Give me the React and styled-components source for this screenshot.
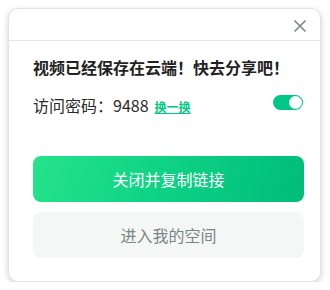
import React from "react";
import styled, { createGlobalStyle } from "styled-components";

const Global = createGlobalStyle`
  html, body {
    margin: 0;
    background: #ffffff;
  }
  body {
    padding: 8px 8px 0 8px;
    font-family: "Noto Sans CJK SC", "Noto Sans", sans-serif;
  }
`;

const Card = styled.div`
  width: 313px;
  height: 274px;
  box-sizing: border-box;
  background: #ffffff;
  border: 1px solid #dfe5e3;
  border-radius: 10px;
  box-shadow: 0 2px 6px rgba(0, 0, 0, 0.18);
  display: flex;
  flex-direction: column;
`;

const Header = styled.div`
  height: 31px;
  border-bottom: 1px solid #e1e9e6;
  display: flex;
  align-items: center;
  justify-content: flex-end;
  padding-right: 14px;
`;

const Close = styled.button`
  border: 0;
  padding: 0;
  background: transparent;
  width: 12px;
  height: 12px;
  display: block;
  margin-top: 2px;
  cursor: pointer;
`;

const Body = styled.div`
  padding: 14px 16px 0 24px;
  display: flex;
  flex-direction: column;
`;

const Title = styled.h2`
  margin: 0;
  font-size: 16px;
  line-height: 24px;
  font-weight: 700;
  color: #222222;
`;

const Row = styled.div`
  display: flex;
  align-items: center;
  margin-top: 14px;
  height: 24px;
`;

const Label = styled.span`
  font-size: 16px;
  line-height: 24px;
  color: #2b2b2b;
`;

const Refresh = styled.a`
  font-size: 12px;
  font-weight: 700;
  color: #00c785;
  text-decoration: underline;
  margin-left: 6px;
  margin-top: 2px;
  cursor: pointer;
`;

const Toggle = styled.span`
  margin-left: auto;
  margin-right: 1px;
  margin-top: -5px;
  width: 30px;
  height: 15px;
  border-radius: 8px;
  background: ${props => (props.on ? "#00c785" : "#cfd6d4")};
  display: flex;
  align-items: center;
  justify-content: ${props => (props.on ? "flex-end" : "flex-start")};
  padding: 0 1px;
  box-sizing: border-box;
`;

const Knob = styled.span`
  width: 13px;
  height: 13px;
  border-radius: 50%;
  background: #ffffff;
`;

const Actions = styled.div`
  margin-top: 39px;
  display: flex;
  flex-direction: column;
  gap: 10px;
`;

const Button = styled.button`
  height: 46px;
  border: 0;
  border-radius: 8px;
  font-family: inherit;
  font-size: 16px;
  cursor: pointer;
  color: ${props => (props.primary ? "#ffffff" : "#7b8582")};
  background: ${props =>
    props.primary
      ? "linear-gradient(110deg, #26e38b 0%, #0fd385 45%, #00bc7b 100%)"
      : "#f5f7f7"};
`;

export default function App() {
  return (
    <>
      <Global />
      <Card>
        <Header>
          <Close type="button" aria-label="关闭">
            <svg width="12" height="12" viewBox="0 0 12 12">
              <path
                d="M1 1L11 11M11 1L1 11"
                stroke="#7f8986"
                strokeWidth="1.7"
                strokeLinecap="round"
              />
            </svg>
          </Close>
        </Header>
        <Body>
          <Title>视频已经保存在云端！快去分享吧！</Title>
          <Row>
            <Label>访问密码：9488</Label>
            <Refresh>换一换</Refresh>
            <Toggle on>
              <Knob />
            </Toggle>
          </Row>
          <Actions>
            <Button type="button" primary>
              关闭并复制链接
            </Button>
            <Button type="button">进入我的空间</Button>
          </Actions>
        </Body>
      </Card>
    </>
  );
}
